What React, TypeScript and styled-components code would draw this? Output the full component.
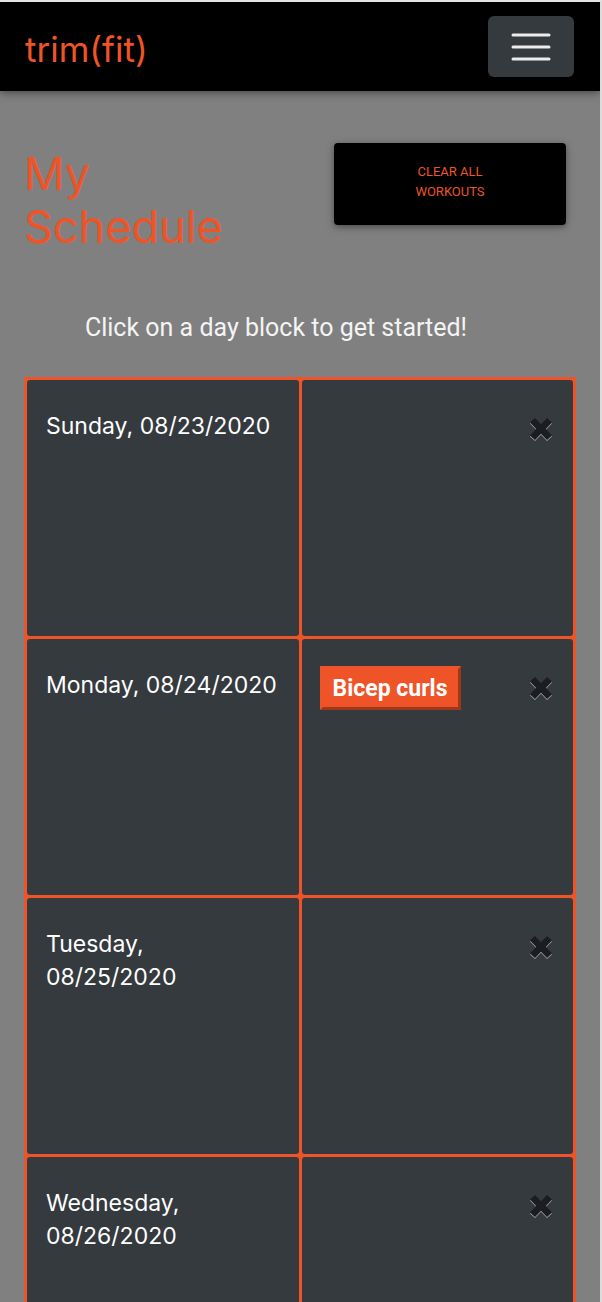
import React from "react";
import styled, { createGlobalStyle } from "styled-components";

const colors = {
  accent: "#ee5428",
  accentDark: "#9e381b",
  page: "#808080",
  panel: "#353a3e",
  text: "#ffffff",
};

const GlobalStyle = createGlobalStyle`
  * { box-sizing: border-box; }
  body { margin: 0; background: ${colors.page}; font-family: Roboto, sans-serif; }
`;

const Page = styled.div`
  display: flex;
  flex-direction: column;
  height: 100vh;
  overflow: hidden;
  background: ${colors.page};
  border-top: 2px solid #e2e5e6;
  border-right: 2px solid #dcdcdc;
`;

const Navbar = styled.header`
  display: flex;
  align-items: center;
  justify-content: space-between;
  flex: none;
  padding: 14px 26px 14px 25px;
  background: #000;
  box-shadow: 0 2px 5px rgba(0, 0, 0, 0.16), 0 2px 10px rgba(0, 0, 0, 0.3);
  z-index: 1;
`;

const Brand = styled.a`
  color: ${colors.accent};
  font: 400 35px/52px Inter, sans-serif;
  text-decoration: none;
  padding-top: 4px;
`;

const MenuButton = styled.button`
  display: flex;
  align-items: center;
  justify-content: center;
  width: 86px;
  height: 61px;
  padding: 0;
  border: 0;
  border-radius: 6px;
  background: ${colors.panel};
`;

const Content = styled.main`
  flex: 1;
  min-height: 0;
  overflow-y: auto;
  scrollbar-width: none;
  padding: 51px 24px 0 24px;
`;

const TitleRow = styled.div`
  display: grid;
  grid-template-columns: 260px 1fr;
  column-gap: 50px;
  align-items: start;
  padding-right: 10px;
`;

const Title = styled.h1`
  margin: 0;
  padding-top: 5px;
  color: ${colors.accent};
  font: 400 45px/53px Inter, sans-serif;
`;

const ClearButton = styled.button`
  margin-top: 1px;
  padding: 19px 72px 23px;
  border: 0;
  border-radius: 4px;
  background: #000;
  color: ${colors.accent};
  font: 400 13px/20px Roboto, sans-serif;
  text-transform: uppercase;
  box-shadow: 0 2px 5px rgba(0, 0, 0, 0.2), 0 2px 10px rgba(0, 0, 0, 0.25);
`;

const Hint = styled.p`
  margin: 0;
  padding: 57px 48px 31px 0;
  color: #f4f4f4;
  font: 400 25px/36px Roboto, sans-serif;
  text-align: center;
`;

const Schedule = styled.table`
  width: 100%;
  table-layout: fixed;
  border-spacing: 3px;
  background: ${colors.accent};
`;

const DayCell = styled.th`
  height: 256px;
  padding: 30px 19px;
  border-radius: 3px;
  background: ${colors.panel};
  color: ${colors.text};
  font: 400 23px/33px Inter, sans-serif;
  text-align: left;
  vertical-align: top;
`;

const WorkoutCell = styled.td`
  height: 256px;
  padding: 27px 20px 27px 18px;
  border-radius: 3px;
  background: ${colors.panel};
  vertical-align: top;
`;

const WorkoutLine = styled.div`
  display: flex;
  align-items: center;
  justify-content: space-between;
  height: 44px;
`;

const Workout = styled.button`
  padding: 4px 10px 3px;
  border: 3px solid;
  border-color: ${colors.accent} ${colors.accentDark} ${colors.accentDark} ${colors.accent};
  background: ${colors.accent};
  color: ${colors.text};
  font: 700 23px/31px Roboto, sans-serif;
`;

const RemoveButton = styled.button`
  display: flex;
  margin-left: auto;
  padding: 0;
  border: 0;
  background: none;
`;

const MenuIcon = () => (
  <svg width="40" height="32" viewBox="0 0 40 32" aria-hidden="true">
    <path d="M2 4H38M2 16H38M2 28H38" stroke="#ececec" strokeWidth="3" strokeLinecap="round" />
  </svg>
);

const CROSS =
  "M6 1 L12 7.2 L18 1 L23 5.5 L16.8 12 L23 18.5 L18 23 L12 16.8 L6 23 L1 18.5 L7.2 12 L1 5.5 Z";

const CrossIcon = () => (
  <svg width="24" height="25" viewBox="0 0 24 25" aria-hidden="true">
    <path d={CROSS} transform="translate(0 1)" fill="#a6a9ac" />
    <path d={CROSS} fill="#1b1d20" />
  </svg>
);

const days: { name: string; date: string; workouts: string[] }[] = [
  { name: "Sunday", date: "08/23/2020", workouts: [] },
  { name: "Monday", date: "08/24/2020", workouts: ["Bicep curls"] },
  { name: "Tuesday", date: "08/25/2020", workouts: [] },
  { name: "Wednesday", date: "08/26/2020", workouts: [] },
];

export default function App() {
  return (
    <>
      <GlobalStyle />
      <Page>
        <Navbar>
          <Brand href="#">trim(fit)</Brand>
          <MenuButton aria-label="Toggle navigation">
            <MenuIcon />
          </MenuButton>
        </Navbar>
        <Content>
          <TitleRow>
            <Title>My Schedule</Title>
            <ClearButton>Clear all workouts</ClearButton>
          </TitleRow>
          <Hint>Click on a day block to get started!</Hint>
          <Schedule>
            <tbody>
              {days.map((day) => (
                <tr key={day.date}>
                  <DayCell scope="row">
                    {day.name}, {day.date}
                  </DayCell>
                  <WorkoutCell>
                    <WorkoutLine>
                      {day.workouts.map((workout) => (
                        <Workout key={workout}>{workout}</Workout>
                      ))}
                      <RemoveButton aria-label={`Clear ${day.name}`}>
                        <CrossIcon />
                      </RemoveButton>
                    </WorkoutLine>
                  </WorkoutCell>
                </tr>
              ))}
            </tbody>
          </Schedule>
        </Content>
      </Page>
    </>
  );
}
